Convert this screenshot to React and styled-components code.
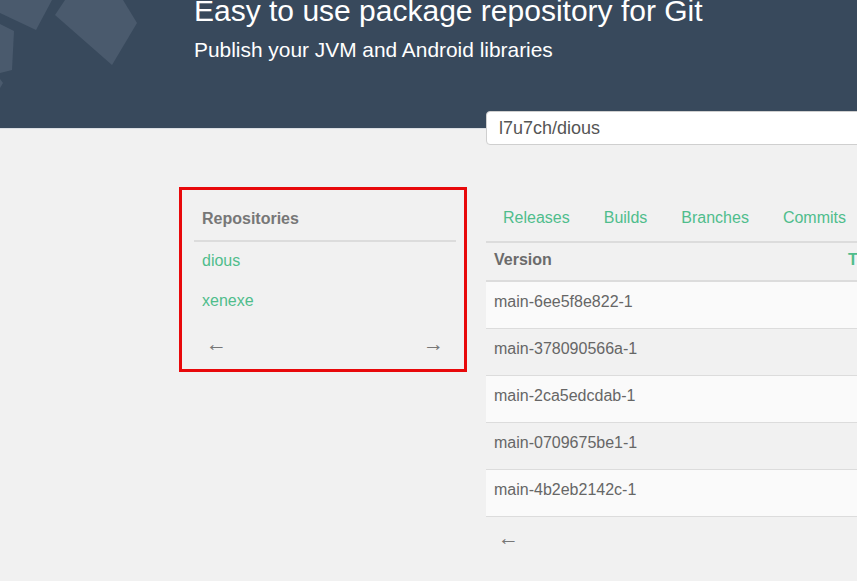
import React from "react";
import styled, { createGlobalStyle } from "styled-components";

const GlobalStyle = createGlobalStyle`
  body {
    margin: 0;
    background: #f1f1f1;
    font-family: "Liberation Sans", Arial, sans-serif;
    overflow: hidden;
  }
`;

const green = "#4fbd8c";

const Header = styled.header`
  position: relative;
  height: 128px;
  background: #38495c;
  border-bottom: 1px solid #dadee3;
  overflow: hidden;
`;

const Shapes = styled.svg`
  position: absolute;
  left: 0;
  top: 0;
`;

const Hero = styled.div`
  padding-left: 194px;
  color: #fff;

  h1 {
    margin: -6px 0 0;
    font-size: 30px;
    line-height: 33px;
    font-weight: normal;
  }

  p {
    margin: 11px 0 0;
    font-size: 20.9px;
    line-height: 24px;
  }
`;

const Main = styled.main`
  display: flex;
  align-items: flex-start;
  gap: 19px;
  padding-left: 179px;
`;

const Panel = styled.section`
  flex: 0 0 auto;
  box-sizing: border-box;
  width: 288px;
  margin-top: 58px;
  padding: 0 8px 0 12px;
  border: 3px solid #e8090b;
`;

const PanelTitle = styled.h3`
  margin: 0;
  padding: 19px 8px 11px;
  font-size: 16px;
  line-height: 20px;
  color: #777;
  border-bottom: 2px solid #dcdcdc;
`;

const RepoLink = styled.a`
  display: block;
  padding: 9px 8px 11px;
  font-size: 16px;
  line-height: 20px;
  color: ${green};
  text-decoration: none;
`;

const Pager = styled.div`
  display: flex;
  justify-content: ${(p) => (p.$single ? "flex-start" : "space-between")};
  padding: ${(p) => p.$pad};
  font-size: 21px;
  line-height: 20px;
  color: #777;
`;

const Content = styled.div`
  flex: 0 0 auto;
  width: 620px;
  margin-top: -18px;
`;

const Search = styled.input`
  position: relative;
  z-index: 1;
  box-sizing: border-box;
  display: block;
  width: 100%;
  height: 34px;
  padding: 0 12px;
  border: 1px solid #cfcfcf;
  border-radius: 4px 0 0 4px;
  background: #fff;
  font-family: inherit;
  font-size: 18px;
  color: #555;
  outline: none;
`;

const Tabs = styled.nav`
  display: flex;
  margin-top: 51px;
`;

const Tab = styled.a`
  padding: 11px 17px 12px;
  font-size: 16px;
  line-height: 22px;
  color: ${green};
  text-decoration: none;
`;

const Table = styled.table`
  width: 100%;
  border-collapse: collapse;
  border-top: 2px solid #dcdcdc;
  font-size: 16px;
  line-height: 22px;
`;

const HeadCell = styled.th`
  text-align: left;
  vertical-align: top;
  height: 22px;
  padding: 6px 8px 9px;
  border-bottom: 2px solid #dcdcdc;
  color: ${(p) => (p.$link ? green : "#6b6b6b")};
  width: ${(p) => p.$width || "auto"};
`;

const Row = styled.tr`
  background: ${(p) => (p.$odd ? "#fafafa" : "transparent")};
  border-bottom: 1px solid #dcdcdc;
`;

const Cell = styled.td`
  vertical-align: top;
  height: 30px;
  padding: 9px 8px 7px;
  color: #666;
`;

const versions = [
  "main-6ee5f8e822-1",
  "main-378090566a-1",
  "main-2ca5edcdab-1",
  "main-0709675be1-1",
  "main-4b2eb2142c-1",
];

const App = () => {
  return (
    <>
      <GlobalStyle />
      <Header>
        <Shapes width="150" height="100" viewBox="0 0 150 100">
          <g fill="#4a5a6d">
            <polygon points="65,0 123,0 137,23 112,65 55,15" />
            <polygon points="0,0 52,0 36,30 0,13" />
            <polygon points="0,24 14,31 12,70 0,73" />
            <polygon points="0,79 3,83 0,88" />
          </g>
        </Shapes>
        <Hero>
          <h1>Easy to use package repository for Git</h1>
          <p>Publish your JVM and Android libraries</p>
        </Hero>
      </Header>
      <Main>
        <Panel>
          <PanelTitle>Repositories</PanelTitle>
          <RepoLink href="#">dious</RepoLink>
          <RepoLink href="#">xenexe</RepoLink>
          <Pager $pad="12px 12px 15px 12px">
            <span>←</span>
            <span>→</span>
          </Pager>
        </Panel>
        <Content>
          <Search readOnly value="l7u7ch/dious" />
          <Tabs>
            <Tab href="#">Releases</Tab>
            <Tab href="#">Builds</Tab>
            <Tab href="#">Branches</Tab>
            <Tab href="#">Commits</Tab>
          </Tabs>
          <Table>
            <thead>
              <tr>
                <HeadCell $width="338px">Version</HeadCell>
                <HeadCell $link>Time</HeadCell>
              </tr>
            </thead>
            <tbody>
              {versions.map((v, i) => (
                <Row key={v} $odd={i % 2 === 0}>
                  <Cell>{v}</Cell>
                  <Cell />
                </Row>
              ))}
            </tbody>
          </Table>
          <Pager $single $pad="11px 12px">
            <span>←</span>
          </Pager>
        </Content>
      </Main>
    </>
  );
};

export default App;
